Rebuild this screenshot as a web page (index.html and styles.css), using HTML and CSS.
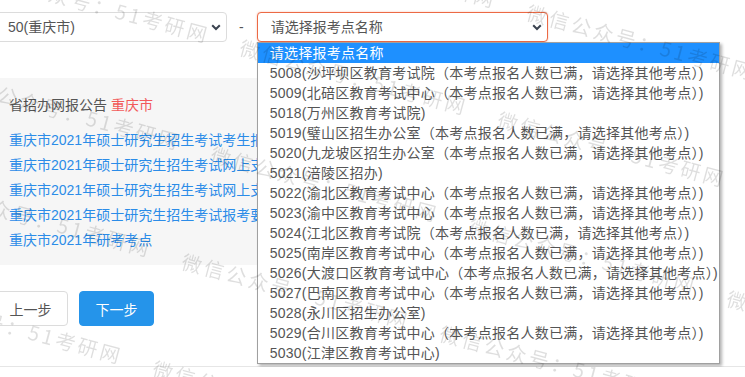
FILE: index.html
```html
<!DOCTYPE html>
<html>

<head>
    <meta charset="utf-8">
    <title>选择报考点</title>
    <meta name="viewport" content="width=device-width, initial-scale=1">
    <link rel="stylesheet" href="styles.css">
</head>

<body>
    <div class="page">
        <div class="pick-row">
            <div class="select select-city">
                <span>50(重庆市)</span>
                <svg class="chev" width="10" height="7" viewBox="0 0 10 7"><polyline points="1.2,1.2 5,5 8.8,1.2" fill="none" stroke="#3b4350" stroke-width="2"/></svg>
            </div>
            <span class="dash">-</span>
            <div class="site-wrap">
                <div class="select select-site">
                    <span>请选择报考点名称</span>
                    <svg class="chev" width="10" height="7" viewBox="0 0 10 7"><polyline points="1.2,1.2 5,5 8.8,1.2" fill="none" stroke="#3b4350" stroke-width="2"/></svg>
                </div>
                <ul class="options">
                    <li class="active">请选择报考点名称</li>
                    <li>5008(沙坪坝区教育考试院（本考点报名人数已满，请选择其他考点）)</li>
                    <li>5009(北碚区教育考试中心（本考点报名人数已满，请选择其他考点）)</li>
                    <li>5018(万州区教育考试院)</li>
                    <li>5019(璧山区招生办公室（本考点报名人数已满，请选择其他考点）)</li>
                    <li>5020(九龙坡区招生办公室（本考点报名人数已满，请选择其他考点）)</li>
                    <li>5021(涪陵区招办)</li>
                    <li>5022(渝北区教育考试中心（本考点报名人数已满，请选择其他考点）)</li>
                    <li>5023(渝中区教育考试中心（本考点报名人数已满，请选择其他考点）)</li>
                    <li>5024(江北区教育考试院（本考点报名人数已满，请选择其他考点）)</li>
                    <li>5025(南岸区教育考试中心（本考点报名人数已满，请选择其他考点）)</li>
                    <li>5026(大渡口区教育考试中心（本考点报名人数已满，请选择其他考点）)</li>
                    <li>5027(巴南区教育考试中心（本考点报名人数已满，请选择其他考点）)</li>
                    <li>5028(永川区招生办公室)</li>
                    <li>5029(合川区教育考试中心（本考点报名人数已满，请选择其他考点）)</li>
                    <li>5030(江津区教育考试中心)</li>
                </ul>
            </div>
        </div>

        <div class="notice">
            <p class="notice-title">省招办网报公告 <span class="city">重庆市</span></p>
            <ul class="notice-links">
                <li><a href="#">重庆市2021年硕士研究生招生考试考生报名须知</a></li>
                <li><a href="#">重庆市2021年硕士研究生招生考试网上支付说明</a></li>
                <li><a href="#">重庆市2021年硕士研究生招生考试网上支付常见问题</a></li>
                <li><a href="#">重庆市2021年硕士研究生招生考试报考要求</a></li>
                <li><a href="#">重庆市2021年研考考点</a></li>
            </ul>
        </div>

        <div class="steps">
            <button class="btn btn-prev">上一步</button>
            <button class="btn btn-next">下一步</button>
        </div>
    </div>
    <div class="foot-line"></div>

    <div class="watermark"></div>

    <script src="script.js"></script>
</body>

</html>
```

FILE: styles.css
```css
* {
    margin: 0;
    padding: 0;
    box-sizing: border-box;
}

body {
    font: 14px "Liberation Sans", "Noto Sans CJK SC", sans-serif;
    color: #555;
    background: #fff;
    overflow: hidden;
}

.page {
    width: 720px;
    margin-left: -7px;
    padding-top: 12px;
}

.pick-row {
    display: flex;
    align-items: center;
}

.select {
    height: 30px;
    border: 1px solid #dcdcdc;
    border-radius: 4px;
    background: #fff;
    display: flex;
    align-items: center;
    justify-content: space-between;
    padding: 0 5px 0 14px;
    line-height: 20px;
}

.select .chev {
    display: block;
    margin-top: 1px;
}

.select-city {
    width: 234px;
}

.dash {
    margin: 0 13px 0 12px;
    line-height: 20px;
}

.site-wrap {
    position: relative;
}

.select-site {
    width: 291px;
    border-color: #ec6a45;
    box-shadow: 0 0 2px rgba(236, 106, 69, 0.45);
    padding-left: 13px;
}

.options {
    position: absolute;
    top: 30px;
    left: 0;
    width: 463px;
    list-style: none;
    background: #fff;
    border: 1px solid #a0a0a0;
    box-shadow: 2px 2px 3px rgba(0, 0, 0, 0.3);
    z-index: 5;
}

.options li {
    height: 20px;
    line-height: 20px;
    padding-left: 12px;
    white-space: nowrap;
    letter-spacing: 0.25px;
    color: #555;
}

.options li.active {
    background: #1e90ff;
    color: #fff;
}

.notice {
    margin-top: 36px;
    background: #f6f6f6;
    padding: 17px 16px 12px;
    overflow: hidden;
}

.notice-title {
    line-height: 20px;
    color: #555;
}

.notice-title .city {
    color: #f25a5a;
}

.notice-links {
    list-style: none;
    margin-top: 13px;
}

.notice-links li {
    line-height: 25px;
    white-space: nowrap;
}

.notice-links a {
    color: #2b8ce8;
    text-decoration: none;
}

.steps {
    margin-top: 26px;
    display: flex;
    gap: 11px;
}

.btn {
    width: 75px;
    height: 35px;
    border-radius: 4px;
    font: inherit;
    cursor: pointer;
}

.btn-prev {
    background: #fff;
    border: 1px solid #dcdcdc;
    color: #555;
}

.btn-next {
    background: #2594ea;
    border: 1px solid #2594ea;
    color: #fff;
}

.foot-line {
    margin-top: 40px;
    border-top: 1px solid #e6e6e6;
}

.watermark {
    position: fixed;
    top: 0;
    left: 0;
    right: 0;
    bottom: 0;
    overflow: hidden;
    pointer-events: none;
    z-index: 10;
}

.wm-text {
    position: absolute;
    font: 20px "Noto Sans CJK SC", sans-serif;
    line-height: 1;
    letter-spacing: 3px;
    color: rgba(0, 0, 0, 0.13);
    white-space: nowrap;
    transform: rotate(15deg);
    transform-origin: 0 0;
}
```

FILE: script.js
```js
// tiled "微信公众号" watermark, laid on a slanted lattice
var wm = document.querySelector('.watermark');
var origin = [243, 37];
var stepA = [287, -35];
var stepB = [-29, 107];

for (var i = -2; i <= 2; i++) {
    for (var j = -1; j <= 4; j++) {
        var x = origin[0] + i * stepA[0] + j * stepB[0];
        var y = origin[1] + i * stepA[1] + j * stepB[1];
        var span = document.createElement('span');
        span.className = 'wm-text';
        span.textContent = '微信公众号：51考研网';
        span.style.left = x + 'px';
        span.style.top = y + 'px';
        wm.appendChild(span);
    }
}
```
